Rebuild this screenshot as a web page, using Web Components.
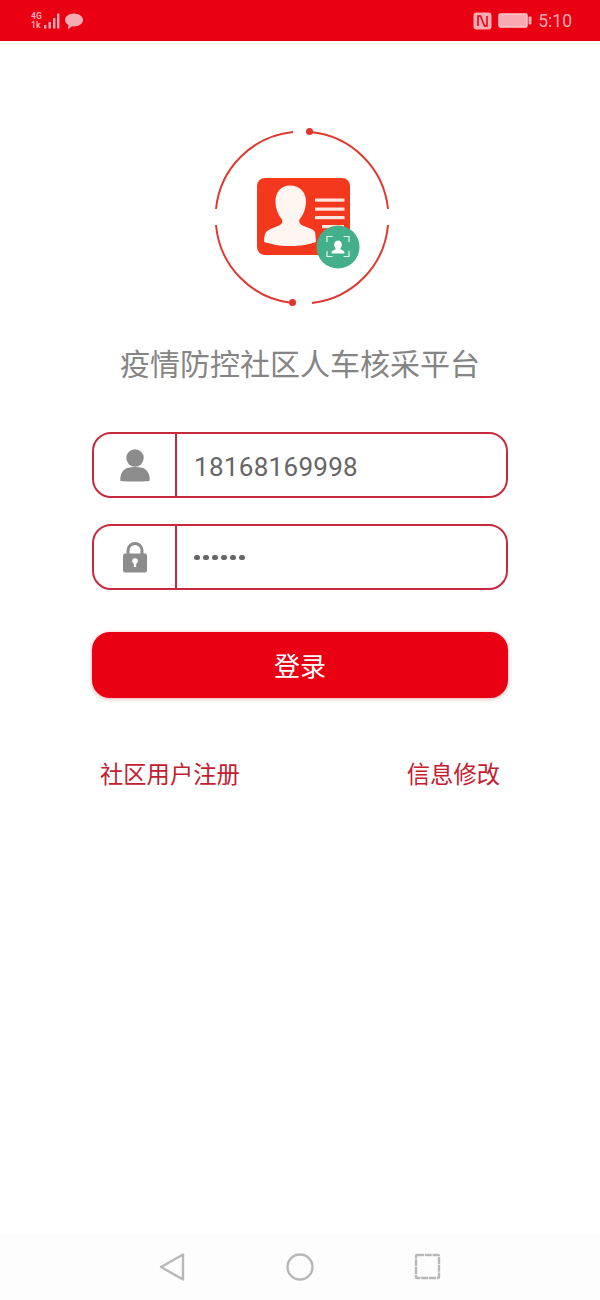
<!DOCTYPE html>
<html lang="zh">
<head>
<meta charset="utf-8">
<title>疫情防控社区人车核采平台</title>
<style>
  html, body { margin: 0; padding: 0; background: #fff; }
  body { width: 600px; height: 1300px; overflow: hidden; font-family: Roboto, "Noto Sans CJK SC", sans-serif; }
</style>
</head>
<body>
<login-page></login-page>

<script>
class StatusBar extends HTMLElement {
    constructor() {
        super();
        this.shadowDOM = this.attachShadow({ mode: "open" });
        this.shadowDOM.innerHTML = `
            <style>
                :host {
                    display: flex;
                    justify-content: space-between;
                    align-items: center;
                    height: 41px;
                    padding: 0 28px 0 31px;
                    box-sizing: border-box;
                    background: #ea0013;
                    color: #f7aab1;
                    font: 17.5px Roboto, sans-serif;
                }
                .side { display: flex; align-items: center; }
                .net {
                    width: 12px;
                    margin-right: 1px;
                    font: bold 8.5px/9px Roboto, sans-serif;
                    white-space: nowrap;
                }
                svg { display: block; }
                .time { margin-left: 6px; }
            </style>
            <div class="side">
                <div class="net">4G<br>1k</div>
                <svg width="40" height="20" viewBox="0 0 40 20" fill="#f7aab1">
                    <rect x="0" y="14" width="2.400" height="3.500"/>
                    <rect x="4.500" y="11" width="2.400" height="6.500"/>
                    <rect x="9" y="7" width="2.400" height="10.500"/>
                    <rect x="13" y="2.500" width="2.400" height="15"/>
                    <path d="M30 2.500c5 0 9 2.900 9 6.500s-4 6.500-9 6.500c-.7 0-1.400-.1-2-.2L24 18.500l.4-4.500c-2-1.200-3.400-3-3.400-5 0-3.600 4-6.500 9-6.500z"/>
                </svg>
            </div>
            <div class="side">
                <svg width="19" height="18" viewBox="0 0 19 18" style="margin-right:6px">
                    <rect x="0.500" y="0.500" width="18" height="17" rx="3" fill="#f7aab1"/>
                    <path d="M5 14V4h2.500l4 10H14V4" fill="none" stroke="#ea0013" stroke-width="1.600"/>
                </svg>
                <svg width="34" height="15" viewBox="0 0 34 15">
                    <rect x="1" y="1" width="28" height="13" rx="1.500" fill="#f7aab1" stroke="#fbc8cc" stroke-width="1.500"/>
                    <rect x="30.500" y="3.500" width="3" height="8" rx="1" fill="#f7aab1"/>
                </svg>
                <span class="time">5:10</span>
            </div>`;
    }
}

class AppLogo extends HTMLElement {
    constructor() {
        super();
        this.shadowDOM = this.attachShadow({ mode: "open" });
        this.shadowDOM.innerHTML = `
            <style>
                :host { display: block; width: 200px; height: 190px; }
                svg { display: block; }
            </style>
            <svg width="200" height="190" viewBox="0 0 200 190">
                <g fill="none" stroke="#df3a31" stroke-width="2">
                    <path d="M110 12A86 86 0 0 1 188 89"/>
                    <path d="M188 105A86 86 0 0 1 112 183"/>
                    <path d="M92 183A86 86 0 0 1 16 105"/>
                    <path d="M16 89A86 86 0 0 1 93 12"/>
                </g>
                <circle cx="109.500" cy="11.500" r="3.500" fill="#e2352b"/>
                <circle cx="92.500" cy="182.500" r="3.500" fill="#e2352b"/>
                <rect x="57" y="58" width="93" height="77" rx="8" fill="#f4381d"/>
                <path d="M90 65.500c9.500 0 16 6.500 16 16 0 7-3 14-6.500 18-1 2 0 4.500 3 6 5 2 11 3.500 12.500 6.500l1 9.500c-1 1-3 1.500-5 2-7 2-14 2.500-21 2.500s-14-.5-20-2.500c-3-.5-5-1-6-2 0-4 .5-7 2-9.500 3-3 8-4.500 13-6.500 3-1.500 4-4 3-6-3.500-4-6.500-11-6.500-18 0-9.500 5.500-16 14.500-16z" fill="#fff6f2"/>
                <g fill="#fce6df">
                    <rect x="115" y="78.500" width="29.500" height="3.200"/>
                    <rect x="115" y="87.500" width="29.500" height="3.200"/>
                    <rect x="115" y="96" width="29.500" height="3.200"/>
                    <rect x="122" y="105" width="22" height="3.200"/>
                </g>
                <circle cx="138" cy="127" r="21.500" fill="#43af8b"/>
                <g fill="none" stroke="#e4f4ee" stroke-width="1.200">
                    <path d="M127 122v-5.500h5.500M143.500 116.500h5.500v5.500M149 131v5.500h-5.500M132.500 136.500H127V131"/>
                </g>
                <path d="M138 120.500c2.400 0 3.800 1.800 3.800 4.200 0 1.500-.6 2.700-1.300 3.500-.3.600 0 1.100.7 1.500 1.500.6 3 1.200 3.200 2.300v1.500h-12.800V132c.2-1.100 1.700-1.700 3.200-2.300.7-.4 1-.9.700-1.500-.7-.8-1.300-2-1.300-3.500 0-2.400 1.400-4.200 3.800-4.200z" fill="#fff"/>
            </svg>`;
    }
}

class LoginField extends HTMLElement {
    constructor() {
        super();
        this.shadowDOM = this.attachShadow({ mode: "open" });
        this.shadowDOM.innerHTML = `
            <style>
                :host {
                    display: flex;
                    height: 66px;
                    box-sizing: border-box;
                    border: 2px solid #c72a3c;
                    border-radius: 19px;
                    background: #fff;
                }
                .icon {
                    width: 81px;
                    flex: none;
                    display: flex;
                    align-items: center;
                    justify-content: center;
                    border-right: 2px solid #c72a3c;
                }
                .value {
                    flex: 1;
                    display: flex;
                    align-items: center;
                    padding: 3px 0 0 17px;
                    color: #666;
                    font: 26px Roboto, sans-serif;
                    letter-spacing: 0.300px;
                }
            </style>
            <div class="icon"><slot name="icon"></slot></div>
            <div class="value"><slot></slot></div>`;
    }
}

class LoginButton extends HTMLElement {
    constructor() {
        super();
        this.shadowDOM = this.attachShadow({ mode: "open" });
        this.shadowDOM.innerHTML = `
            <style>
                :host {
                    display: flex;
                    align-items: center;
                    justify-content: center;
                    height: 66px;
                    padding-bottom: 2px;
                    box-sizing: border-box;
                    border-radius: 18px;
                    background: #ea0013;
                    color: #fff;
                    font: 26px "Noto Sans CJK SC", sans-serif;
                    box-shadow: 0 1px 4px rgba(200, 60, 60, 0.4);
                }
            </style>
            <slot></slot>`;
    }
}

class NavBar extends HTMLElement {
    constructor() {
        super();
        this.shadowDOM = this.attachShadow({ mode: "open" });
        this.shadowDOM.innerHTML = `
            <style>
                :host {
                    display: flex;
                    justify-content: center;
                    align-items: center;
                    height: 66px;
                    background: #fdfdfd;
                    gap: 99px;
                }
                svg { display: block; }
            </style>
            <svg width="28" height="30" viewBox="0 0 28 30" fill="none" stroke="#b8b8b8" stroke-width="2.400" stroke-linejoin="round">
                <path d="M24 2.500v25L2 15z"/>
            </svg>
            <svg width="28" height="28" viewBox="0 0 28 28" fill="none" stroke="#b8b8b8" stroke-width="2.400">
                <circle cx="14" cy="14" r="12.500"/>
            </svg>
            <svg width="28" height="28" viewBox="0 0 28 28" fill="none" stroke="#b8b8b8" stroke-width="2.400" stroke-linejoin="round" stroke-dasharray="7 .8">
                <rect x="3" y="2" width="23" height="23" rx="1"/>
            </svg>`;
    }
}

class LoginPage extends HTMLElement {
    constructor() {
        super();
        this.shadowDOM = this.attachShadow({ mode: "open" });
        this.shadowDOM.innerHTML = `
            <style>
                :host {
                    display: flex;
                    flex-direction: column;
                    width: 600px;
                    height: 1300px;
                    font-family: "Noto Sans CJK SC", sans-serif;
                }
                main {
                    flex: 1;
                    display: flex;
                    flex-direction: column;
                    padding: 79px 92px 0;
                }
                app-logo { align-self: center; }
                h1 {
                    margin: 30px 0 0;
                    height: 44px;
                    line-height: 44px;
                    text-align: center;
                    font-size: 30px;
                    font-weight: 400;
                    color: #858585;
                    white-space: nowrap;
                }
                .first { margin-top: 48px; }
                .second { margin-top: 26px; }
                login-button { margin-top: 42px; }
                .links {
                    display: flex;
                    justify-content: space-between;
                    margin-top: 58px;
                    padding: 0 8px;
                    font-size: 23.300px;
                    line-height: 34px;
                    color: #c3202f;
                }
                svg { display: block; }
                .dots { display: flex; gap: 3.200px; margin-top: -2px; }
                .dots i { width: 5.800px; height: 5.800px; border-radius: 50%; background: #666; }
            </style>
            <status-bar></status-bar>
            <main>
                <app-logo></app-logo>
                <h1>疫情防控社区人车核采平台</h1>
                <login-field class="first">
                    <svg slot="icon" width="30" height="33" viewBox="0 0 30 33" fill="#8c8c8c">
                        <circle cx="15" cy="9" r="8.700"/>
                        <path d="M.5 32c-1-6 2-11 6.500-13 5-1.500 11-1.500 16 0 4.500 2 7.500 7 6.500 13-1 .6-27.500 .6-29 0z"/>
                    </svg>
                    18168169998
                </login-field>
                <login-field class="second">
                    <svg slot="icon" width="26" height="31" viewBox="0 0 26 31">
                        <path d="M6 13V8.500a7 7 0 0 1 14 0V13" fill="none" stroke="#8c8c8c" stroke-width="3"/>
                        <rect x="1" y="11.500" width="24" height="19" rx="2" fill="#8c8c8c"/>
                        <circle cx="13" cy="19" r="2.800" fill="#fff"/>
                        <rect x="11.800" y="19" width="2.400" height="6" fill="#fff"/>
                    </svg>
                    <span class="dots" aria-label="password"><i></i><i></i><i></i><i></i><i></i><i></i></span>
                </login-field>
                <login-button>登录</login-button>
                <div class="links"><span>社区用户注册</span><span>信息修改</span></div>
            </main>
            <nav-bar></nav-bar>`;
    }
}

customElements.define("status-bar", StatusBar);
customElements.define("app-logo", AppLogo);
customElements.define("login-field", LoginField);
customElements.define("login-button", LoginButton);
customElements.define("nav-bar", NavBar);
customElements.define("login-page", LoginPage);
</script>
</body>
</html>
